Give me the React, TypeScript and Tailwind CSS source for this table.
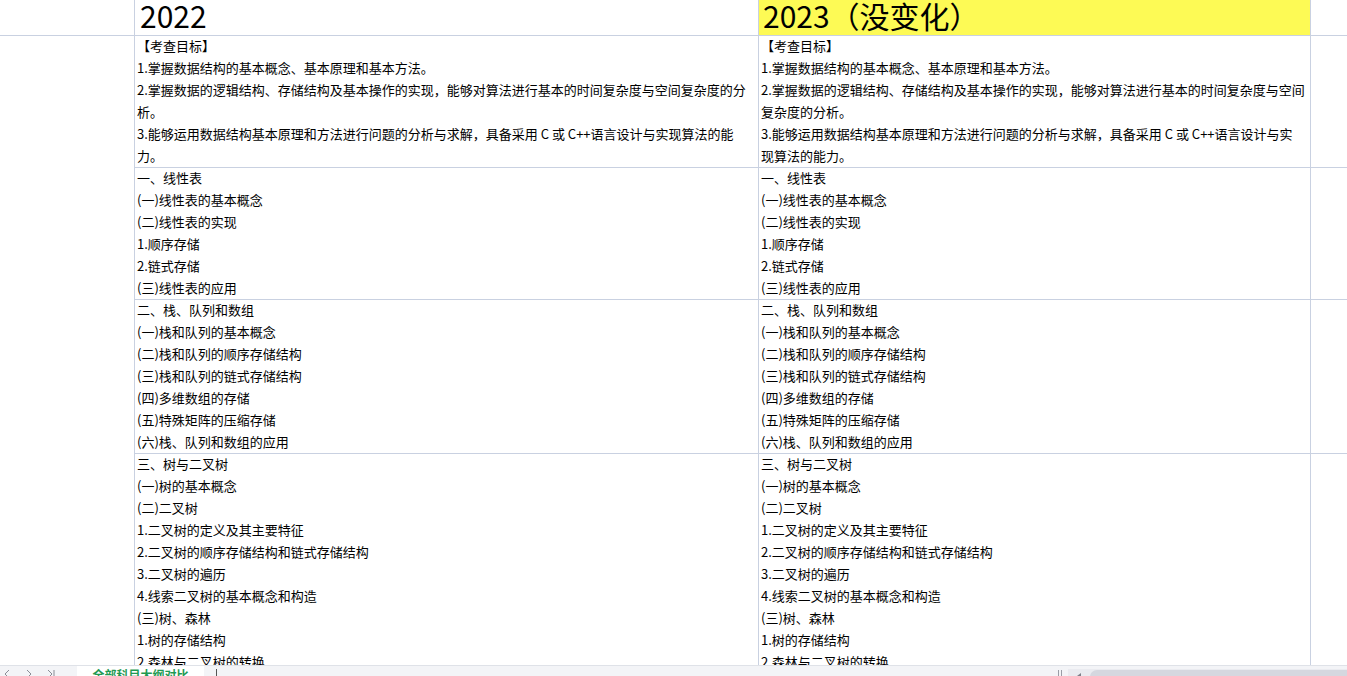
const goals2022 = [
  "【考查目标】",
  "1.掌握数据结构的基本概念、基本原理和基本方法。",
  "2.掌握数据的逻辑结构、存储结构及基本操作的实现，能够对算法进行基本的时间复杂度与空间复杂度的分",
  "析。",
  "3.能够运用数据结构基本原理和方法进行问题的分析与求解，具备采用 C 或 C++语言设计与实现算法的能",
  "力。",
];

const goals2023 = [
  "【考查目标】",
  "1.掌握数据结构的基本概念、基本原理和基本方法。",
  "2.掌握数据的逻辑结构、存储结构及基本操作的实现，能够对算法进行基本的时间复杂度与空间",
  "复杂度的分析。",
  "3.能够运用数据结构基本原理和方法进行问题的分析与求解，具备采用 C 或 C++语言设计与实",
  "现算法的能力。",
];

const linear = [
  "一、线性表",
  "(一)线性表的基本概念",
  "(二)线性表的实现",
  "1.顺序存储",
  "2.链式存储",
  "(三)线性表的应用",
];

const stack = [
  "二、栈、队列和数组",
  "(一)栈和队列的基本概念",
  "(二)栈和队列的顺序存储结构",
  "(三)栈和队列的链式存储结构",
  "(四)多维数组的存储",
  "(五)特殊矩阵的压缩存储",
  "(六)栈、队列和数组的应用",
];

const tree = [
  "三、树与二叉树",
  "(一)树的基本概念",
  "(二)二叉树",
  "1.二叉树的定义及其主要特征",
  "2.二叉树的顺序存储结构和链式存储结构",
  "3.二叉树的遍历",
  "4.线索二叉树的基本概念和构造",
  "(三)树、森林",
  "1.树的存储结构",
  "2.森林与二叉树的转换",
  "3.树和森林的遍历",
  "(四)树与二叉树的应用",
];

const line = "border-[#c9d1e1]";

function Lines({ items }: { items: string[] }) {
  return (
    <div className="-mt-px pl-[2px] text-[13px] leading-[22px] text-black">
      {items.map((t, i) => (
        <div key={i} className="whitespace-nowrap">
          {t}
        </div>
      ))}
    </div>
  );
}

function Row({ h, left, right }: { h: string; left: string[]; right: string[] }) {
  return (
    <div className={`flex shrink-0 ${h}`}>
      <div className="w-[135px] shrink-0 border-r border-[#c9d1e1]" />
      <div className={`w-[624px] shrink-0 overflow-hidden border-r border-b ${line}`}>
        <Lines items={left} />
      </div>
      <div className={`w-[552px] shrink-0 overflow-hidden border-r border-b ${line}`}>
        <Lines items={right} />
      </div>
      <div className={`flex-1 border-b ${line}`} />
    </div>
  );
}

export default function App() {
  return (
    <div className="flex h-[676px] w-full flex-col overflow-hidden bg-white font-['Noto_Sans_CJK_SC',sans-serif]">
      <div className="flex h-[665px] shrink-0 flex-col overflow-hidden">
        {/* header */}
        <div className={`flex h-[36px] shrink-0 border-b ${line}`}>
          <div className="w-[135px] shrink-0 border-r border-[#c9d1e1]" />
          <div className="w-[624px] shrink-0 whitespace-nowrap border-r border-[#c9d1e1] pl-[5px] text-[30px] leading-[31px] text-black">
            2022
          </div>
          <div className="w-[552px] shrink-0 whitespace-nowrap border-r border-[#c9d1e1] bg-[#fdfa55] pl-[4px] text-[30px] leading-[31px] text-black">
            2023（没变化）
          </div>
          <div className="flex-1" />
        </div>

        <Row h="h-[132px]" left={goals2022} right={goals2023} />
        <Row h="h-[132px]" left={linear} right={linear} />
        <Row h="h-[154px]" left={stack} right={stack} />
        <Row h="h-[260px]" left={tree} right={tree} />
      </div>

      {/* sheet tab bar */}
      <div className="flex h-[30px] shrink-0 items-start border-t border-[#dfe2e8] bg-[#f3f4f7]">
        <div className="flex w-[77px] shrink-0 items-center gap-[14px] pl-[3px] pt-[3px] text-[#8a8d96]">
          <svg width="8" height="10" viewBox="0 0 8 10" fill="none" stroke="currentColor" strokeWidth="1">
            <path d="M6 1L2 5L6 9" />
          </svg>
          <svg width="8" height="10" viewBox="0 0 8 10" fill="none" stroke="currentColor" strokeWidth="1">
            <path d="M2 1L6 5L2 9" />
          </svg>
          <svg width="8" height="10" viewBox="0 0 8 10" fill="none" stroke="currentColor" strokeWidth="1">
            <path d="M1 1L5 5L1 9M7 1V9" />
          </svg>
        </div>
        <div className="flex h-full w-[127px] shrink-0 items-start justify-center bg-white pt-[1px] text-[12px] font-bold leading-[16px] text-[#1f9a52]">
          全部科目大纲对比
        </div>
        <div className="ml-[12px] mt-[3px] h-[20px] w-px bg-[#555]" />
        <div className="flex-1" />
        <div className="mt-[4px] flex gap-[2px] pr-[6px]">
          <div className="h-[12px] w-px bg-[#9a9da6]" />
          <div className="h-[12px] w-px bg-[#9a9da6]" />
        </div>
        <div className="mt-[3px] flex h-[24px] w-[279px] shrink-0 items-start bg-[#eaebf0]">
          <svg className="ml-[8px] mt-[3px]" width="6" height="8" viewBox="0 0 6 8" fill="#7d808a">
            <path d="M5 1L1 4L5 7Z" />
          </svg>
          <div className="ml-[8px] mt-px h-[14px] flex-1 rounded-l-full bg-[#d5d7df]" />
        </div>
      </div>
    </div>
  );
}
